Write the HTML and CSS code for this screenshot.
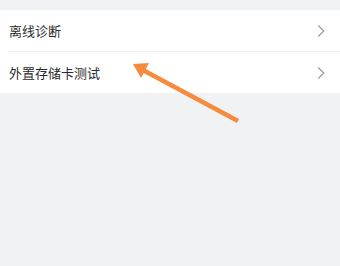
FILE: index.html
```html
<!DOCTYPE html>
<html lang="zh">
<head>
<meta charset="utf-8">
<link rel="stylesheet" href="styles.css">
</head>
<body>
<div class="page">
  <div class="list">
    <div class="row">
      <span class="label">离线诊断</span>
      <svg class="chev" width="8" height="14" viewBox="0 0 8 14"><path d="M1.3 1.5 L6.8 7 L1.3 12.5" fill="none" stroke="#999999" stroke-width="1.2"/></svg>
    </div>
    <div class="row">
      <span class="label">外置存储卡测试</span>
      <svg class="chev" width="8" height="14" viewBox="0 0 8 14"><path d="M1.3 1.5 L6.8 7 L1.3 12.5" fill="none" stroke="#999999" stroke-width="1.2"/></svg>
    </div>
  </div>
  <svg class="arrow" width="340" height="266" viewBox="0 0 340 266">
    <line x1="238" y1="121" x2="141" y2="69" stroke="#f68b3c" stroke-width="4.5"/>
    <polygon points="133,64 149,63 141,78" fill="#f68b3c"/>
  </svg>
</div>
</body>
</html>
```
FILE: styles.css
```css
html, body {
  margin: 0;
  padding: 0;
  background: #f1f2f4;
}
.page {
  position: relative;
  width: 340px;
  height: 266px;
  padding-top: 10px;
  box-sizing: border-box;
  font-family: "Noto Sans CJK SC", "Noto Sans", sans-serif;
}
.list {
  background: #ffffff;
}
.row {
  height: 41px;
  margin-left: 8px;
  padding-left: 1px;
  padding-right: 15px;
  display: flex;
  align-items: center;
  justify-content: space-between;
}
.row + .row {
  border-top: 1px solid #ececec;
}
.label {
  font-size: 13px;
  color: #2b2b2b;
}
.chev {
  display: block;
}
.arrow {
  position: absolute;
  left: 0;
  top: 0;
}
```
